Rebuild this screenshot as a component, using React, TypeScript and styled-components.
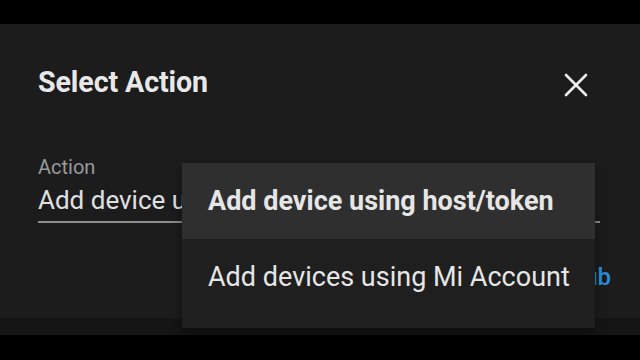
import React from "react";
import styled, { createGlobalStyle } from "styled-components";

const GlobalStyle = createGlobalStyle`
  html, body {
    margin: 0;
    padding: 0;
    background: #000;
    font-family: Roboto, "Noto Sans", sans-serif;
  }
`;

const Screen = styled.div`
  width: 640px;
  height: 360px;
  overflow: hidden;
  display: flex;
  flex-direction: column;
  padding-top: 24px;
  box-sizing: border-box;
  background: #000;
`;

const Dialog = styled.div`
  position: relative;
  height: 294px;
  background: #1c1c1c;
  padding: 0 40px 0 38px;
  box-sizing: border-box;
  display: flex;
  flex-direction: column;
`;

const Shelf = styled.div`
  height: 17px;
  background: #151515;
`;

const Header = styled.div`
  display: flex;
  align-items: center;
  justify-content: space-between;
  height: 56px;
  margin-top: 30px;
`;

const Title = styled.h2`
  margin: 0;
  font-size: 28.6px;
  font-weight: 700;
  color: #e8e8e8;
  letter-spacing: -0.1px;
`;

const CloseButton = styled.button`
  width: 24px;
  height: 24px;
  padding: 0;
  border: none;
  background: none;
  display: flex;
  align-items: center;
  justify-content: center;
  margin-right: 12px;
  margin-top: 6px;
`;

const Field = styled.div`
  margin-top: 45px;
  display: flex;
  flex-direction: column;
  border-bottom: 2px solid #8c8c8c;
  padding-bottom: 6px;
`;

const Label = styled.span`
  font-size: 20px;
  color: #9a9a9a;
  line-height: 24px;
`;

/* the open menu covers the rest of the selected value */
const Value = styled.span`
  font-size: 26px;
  color: #e0e0e0;
  line-height: 30px;
  margin-top: 6px;
  max-width: 144px;
  white-space: nowrap;
  overflow: hidden;
`;

const Actions = styled.div`
  display: flex;
  justify-content: flex-end;
  margin-top: 40px;
  margin-right: -11px;
  line-height: 28px;
`;

const ActionText = styled.span`
  font-size: 24px;
  font-weight: 500;
  color: #2a8fe0;
`;

const Menu = styled.div`
  position: absolute;
  left: 182px;
  top: 139px;
  width: 413px;
  background: #1f1f1f;
  box-shadow: 0 4px 10px rgba(0, 0, 0, 0.45);
  display: flex;
  flex-direction: column;
`;

const MenuItem = styled.div<{ $active?: boolean }>`
  height: ${(p) => (p.$active ? 76 : 89)}px;
  display: flex;
  align-items: ${(p) => (p.$active ? "center" : "flex-start")};
  padding-left: 26px;
  padding-top: ${(p) => (p.$active ? 0 : 22)}px;
  box-sizing: border-box;
  background: ${(p) => (p.$active ? "#2f2f2f" : "transparent")};
  font-size: 27px;
  line-height: 32px;
  font-weight: ${(p) => (p.$active ? 700 : 400)};
  color: #e6e6e6;
  white-space: nowrap;
`;

export default function App() {
  return (
    <>
      <GlobalStyle />
      <Screen>
        <Dialog>
          <Header>
            <Title>Select Action</Title>
            <CloseButton aria-label="Close">
              <svg width="24" height="24" viewBox="0 0 24 24">
                <path
                  d="M2 2 L22 22 M22 2 L2 22"
                  stroke="#f0f0f0"
                  strokeWidth="2.6"
                  strokeLinecap="round"
                />
              </svg>
            </CloseButton>
          </Header>
          <Field>
            <Label>Action</Label>
            <Value>Add device using host/token</Value>
          </Field>
          <Actions>
            <ActionText>Sub</ActionText>
          </Actions>
          <Menu>
            <MenuItem $active>Add device using host/token</MenuItem>
            <MenuItem>Add devices using Mi Account</MenuItem>
          </Menu>
        </Dialog>
        <Shelf />
      </Screen>
    </>
  );
}
